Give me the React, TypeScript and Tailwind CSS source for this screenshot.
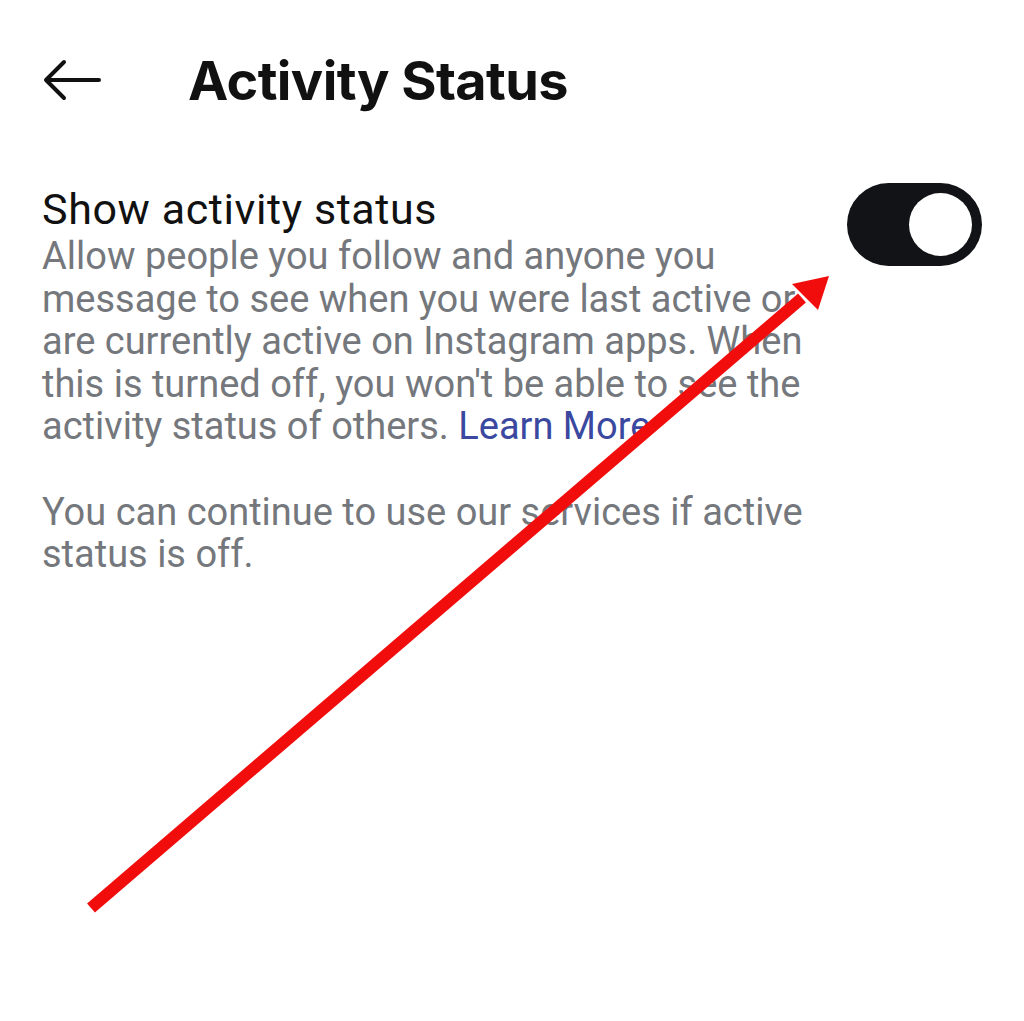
import React from "react";

function BackArrow() {
  return (
    <svg width="60" height="44" viewBox="0 0 60 44" fill="none" aria-hidden>
      <path
        d="M57 22H4M22 4L4 22l18 18"
        stroke="#111111"
        strokeWidth="4"
        strokeLinecap="round"
        strokeLinejoin="round"
      />
    </svg>
  );
}

function Toggle({ on }: { on: boolean }) {
  return (
    <button
      type="button"
      role="switch"
      aria-checked={on}
      className="flex h-[83px] w-[135px] shrink-0 items-center justify-end rounded-full bg-[#121316] px-[10px]"
    >
      <span className="block h-[63px] w-[63px] rounded-full bg-white" />
    </button>
  );
}

export default function App() {
  return (
    <div className="relative h-[1021px] w-[1024px] overflow-hidden bg-white font-['Roboto','Liberation_Sans',sans-serif]">
      <header className="flex h-[112px] items-center pt-[48px] pl-[42px]">
        <BackArrow />
        <h1 className="ml-[86px] font-['Inter','Roboto',sans-serif] text-[54px] font-bold tracking-[-0.6px] text-[#111111]">
          Activity Status
        </h1>
      </header>

      <section className="flex items-start justify-between pt-[71px] pl-[42px] pr-[42px]">
        <div className="w-[770px]">
          <h2 className="text-[43px] leading-[52px] tracking-[0.6px] text-[#111111]">
            Show activity status
          </h2>
          <p className="text-[38px] leading-[42.6px] text-[#74777c]">
            Allow people you follow and anyone you message to see when you were last active or
            are currently active on Instagram apps. When this is turned off, you won't be able to
            see the activity status of others.{" "}
            <a href="#" className="text-[#3a48a0]">
              Learn More
            </a>
          </p>
          <p className="mt-[42.6px] text-[38px] leading-[42.6px] text-[#74777c]">
            You can continue to use our services if active status is off.
          </p>
        </div>
        <Toggle on />
      </section>

      {/* red annotation arrow */}
      <svg
        className="pointer-events-none absolute inset-0"
        width="1024"
        height="1021"
        viewBox="0 0 1024 1021"
        aria-hidden
      >
        <line x1="91" y1="908" x2="802" y2="298" stroke="#f20d0d" strokeWidth="12" />
        <polygon points="829,276 792,284 818,310" fill="#f20d0d" />
      </svg>
    </div>
  );
}
